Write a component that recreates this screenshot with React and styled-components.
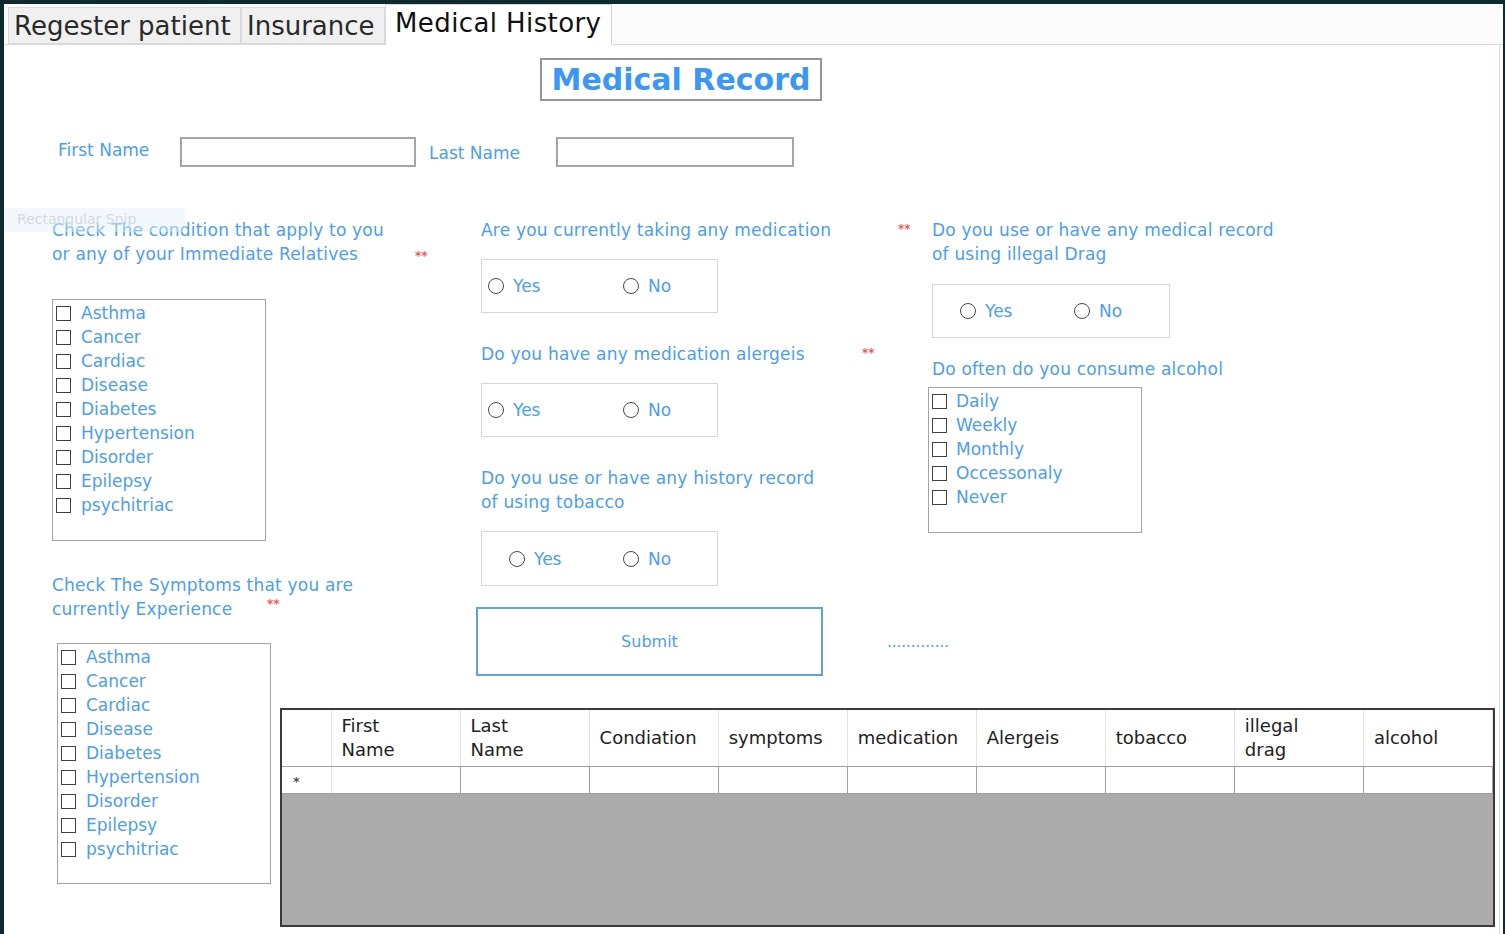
import React from 'react';
import styled, { createGlobalStyle } from 'styled-components';

const BLUE = '#4b9ef0';
const FONT = '"DejaVu Sans", "Liberation Sans", sans-serif';

const GlobalStyle = createGlobalStyle`
  html, body {
    margin: 0;
    padding: 0;
  }
  body {
    background: #0f2a2f;
    font-family: ${FONT};
    overflow: hidden;
  }
  * {
    box-sizing: border-box;
  }
`;

const Window = styled.div`
  margin: 4px 0 0 4px;
  width: 1499px;
  height: 930px;
  background: #fff;
  display: flex;
  flex-direction: column;
`;

const TabStrip = styled.div`
  height: 41px;
  display: flex;
  align-items: flex-end;
  padding-left: 4px;
  border-bottom: 1px solid #d9d9d9;
  background: #fcfcfc;
`;

const Tab = styled.div`
  width: ${p => p.$width}px;
  height: ${p => (p.$active ? 41 : 37)}px;
  margin-bottom: ${p => (p.$active ? -1 : 0)}px;
  padding: ${p => (p.$active ? '0 0 4px 9px' : '0 0 0 5px')};
  display: flex;
  align-items: center;
  font-size: 26px;
  letter-spacing: ${p => (p.$active ? 0.4 : 0)}px;
  color: ${p => (p.$active ? '#111' : '#2a2a2a')};
  background: ${p => (p.$active ? '#fff' : '#f0f0f0')};
  border: 1px solid #d9d9d9;
  border-bottom: ${p => (p.$active ? 'none' : '1px solid #d9d9d9')};
  white-space: nowrap;
  position: relative;
`;

const Panel = styled.div`
  position: relative;
  flex: 1;
  width: 1496px;
  border-right: 1px solid #dedede;
  padding-left: 48px;
  display: flex;
  flex-direction: column;
  align-items: flex-start;
`;

const SnipHint = styled.div`
  position: absolute;
  left: 0;
  top: 163px;
  width: 181px;
  height: 24px;
  padding-left: 13px;
  background: rgba(226, 240, 250, 0.45);
  color: #d3d9de;
  font-size: 14px;
  line-height: 22px;
`;

const TitleBox = styled.div`
  margin: 13px 0 0 488px;
  width: 282px;
  height: 43px;
  border: 2px solid #959595;
  display: flex;
  align-items: center;
  justify-content: center;
  font-size: 30px;
  font-weight: bold;
  color: #3b97f6;
`;

const NameRow = styled.div`
  margin-top: 36px;
  height: 30px;
  display: flex;
  align-items: flex-start;
`;

const FieldLabel = styled.div`
  width: ${p => p.$width}px;
  margin-left: ${p => p.$ml}px;
  margin-top: ${p => p.$mt}px;
  font-size: 17px;
  line-height: 24px;
  color: ${BLUE};
`;

const TextInput = styled.input`
  width: ${p => p.$width}px;
  height: 30px;
  border: 2px solid #a5a5a5;
  background: #fff;
  outline: none;
`;

const MainArea = styled.div`
  margin-top: 51px;
  display: flex;
  align-items: flex-start;
`;

const LeftCol = styled.div`
  width: 228px;
  flex: none;
  display: flex;
  flex-direction: column;
  align-items: flex-start;
`;

const RightArea = styled.div`
  display: flex;
  flex-direction: column;
  align-items: flex-start;
`;

const TopRow = styled.div`
  display: flex;
  align-items: flex-start;
`;

const MiddleCol = styled.div`
  margin-left: 196px;
  width: 452px;
  display: flex;
  flex-direction: column;
  align-items: flex-start;
`;

const SideCol = styled.div`
  display: flex;
  flex-direction: column;
  align-items: flex-start;
`;

const Question = styled.div`
  display: flex;
  align-items: flex-start;
  margin-top: ${p => p.$mt || 0}px;
  margin-left: ${p => p.$ml || 0}px;
`;

const QuestionText = styled.div`
  width: ${p => p.$width}px;
  flex: none;
  font-size: 17px;
  line-height: 24px;
  letter-spacing: 0.2px;
  color: ${BLUE};
  white-space: nowrap;
`;

const Stars = styled.span`
  margin-top: ${p => p.$mt}px;
  font-size: 12px;
  line-height: 10px;
  font-weight: bold;
  color: #f05a5a;
`;

const CheckList = styled.div`
  width: 214px;
  height: ${p => p.$height}px;
  margin-top: ${p => p.$mt}px;
  margin-left: ${p => p.$ml || 0}px;
  border: 1px solid #a4a4a4;
  padding: 1px 0 0 3px;
  display: flex;
  flex-direction: column;
`;

const CheckItem = styled.label`
  height: 24px;
  display: flex;
  align-items: center;
  gap: ${p => p.$gap || 10}px;
  font-size: 17px;
  color: ${BLUE};
`;

const CheckSquare = styled.span`
  width: 15px;
  height: 15px;
  flex: none;
  border: 1.5px solid #3f3f3f;
  background: #fff;
`;

const RadioBox = styled.div`
  width: ${p => p.$width}px;
  height: ${p => p.$height}px;
  margin-top: ${p => p.$mt}px;
  margin-left: ${p => p.$ml}px;
  padding-left: ${p => p.$pad}px;
  border: 1px solid #d6d6d6;
  display: flex;
  align-items: center;
`;

const RadioOption = styled.label`
  width: ${p => p.$width || 'auto'};
  display: flex;
  align-items: center;
  gap: 9px;
  font-size: 17px;
  color: ${BLUE};
`;

const RadioCircle = styled.span`
  width: 16px;
  height: 16px;
  flex: none;
  border-radius: 50%;
  border: 1.5px solid #4a4a4a;
  background: #fff;
`;

const SubmitRow = styled.div`
  margin-top: 21px;
  display: flex;
  align-items: center;
`;

const SubmitButton = styled.button`
  width: 347px;
  height: 69px;
  border: 2px solid #5ea2e4;
  background: #fff;
  color: ${BLUE};
  font-family: ${FONT};
  font-size: 16px;
  cursor: pointer;
`;

const Dots = styled.span`
  margin-left: 64px;
  font-size: 15px;
  color: ${BLUE};
`;

const GridFrame = styled.div`
  margin-top: 32px;
  width: 1215px;
  height: 219px;
  border: 2px solid #3a3a3a;
  background: #ababab;
`;

const DataGrid = styled.table`
  width: 100%;
  border-collapse: collapse;
  table-layout: fixed;
  font-family: ${FONT};
`;

const Col = styled.col`
  width: ${p => p.$width}px;
`;

const HeadCell = styled.th`
  height: 56px;
  padding: 0 0 0 10px;
  text-align: left;
  vertical-align: middle;
  font-weight: normal;
  font-size: 18px;
  line-height: 24px;
  color: #222;
  background: #fff;
  border-right: 1px solid #e4e4e4;
  border-bottom: 1px solid #a0a0a0;
`;

const BodyCell = styled.td`
  height: 27px;
  padding: 0;
  background: #fff;
  border-right: 1px solid #a0a0a0;
  border-bottom: 1px solid #a0a0a0;
`;

const MarkerCell = styled(BodyCell)`
  padding: 4px 0 0 11px;
  font-size: 13px;
  font-weight: bold;
  color: #555;
  border-right-color: #e4e4e4;
`;

const conditions = ['Asthma', 'Cancer', 'Cardiac', 'Disease', 'Diabetes', 'Hypertension', 'Disorder', 'Epilepsy', 'psychitriac'];
const frequencies = ['Daily', 'Weekly', 'Monthly', 'Occessonaly', 'Never'];
const columns = [['First', 'Name'], ['Last', 'Name'], ['Condiation'], ['symptoms'], ['medication'], ['Alergeis'], ['tobacco'], ['illegal', 'drag'], ['alcohol']];

const YesNo = ({ mt, ml, width, pad, yesWidth, height = 54 }) => (
  <RadioBox $mt={mt} $ml={ml} $width={width} $pad={pad} $height={height}>
    <RadioOption $width={`${yesWidth}px`}><RadioCircle />Yes</RadioOption>
    <RadioOption><RadioCircle />No</RadioOption>
  </RadioBox>
);

const Checks = ({ items, gap, ...rest }) => (
  <CheckList {...rest}>
    {items.map(item => (
      <CheckItem key={item} $gap={gap}><CheckSquare />{item}</CheckItem>
    ))}
  </CheckList>
);

export default function App() {
  return (
    <>
      <GlobalStyle />
      <Window>
        <TabStrip>
          <Tab $width={233}>Regester patient</Tab>
          <Tab $width={144}>Insurance</Tab>
          <Tab $width={227} $active>Medical History</Tab>
        </TabStrip>

        <Panel>
          <SnipHint>Rectangular Snip</SnipHint>

          <TitleBox>Medical Record</TitleBox>

          <NameRow>
            <FieldLabel $width={122} $ml={6} $mt={1}>First Name</FieldLabel>
            <TextInput $width={236} />
            <FieldLabel $width={127} $ml={13} $mt={4}>Last Name</FieldLabel>
            <TextInput $width={238} />
          </NameRow>

          <MainArea>
            <LeftCol>
              <Question>
                <QuestionText $width={363}>
                  Check The condition that apply to you<br />or any of your Immediate Relatives
                </QuestionText>
                <Stars $mt={33}>**</Stars>
              </Question>
              <Checks items={conditions} $height={242} $mt={33} />

              <Question $mt={32}>
                <QuestionText $width={215}>
                  Check The Symptoms that you are<br />currently Experience
                </QuestionText>
                <Stars $mt={26}>**</Stars>
              </Question>
              <Checks items={conditions} $height={241} $mt={22} $ml={5} />
            </LeftCol>

            <RightArea>
              <TopRow>
                <MiddleCol>
                  <Question $ml={5}>
                    <QuestionText $width={417}>Are you currently taking any medication</QuestionText>
                    <Stars $mt={6}>**</Stars>
                  </Question>
                  <YesNo mt={17} ml={5} width={237} pad={6} yesWidth={135} />

                  <Question $mt={29} $ml={5}>
                    <QuestionText $width={381}>Do you have any medication alergeis</QuestionText>
                    <Stars $mt={6}>**</Stars>
                  </Question>
                  <YesNo mt={17} ml={5} width={237} pad={6} yesWidth={135} />

                  <Question $mt={29} $ml={5}>
                    <QuestionText $width={400}>
                      Do you use or have any history record<br />of using tobacco
                    </QuestionText>
                  </Question>
                  <YesNo mt={17} ml={5} width={237} pad={27} yesWidth={114} height={55} />

                  <SubmitRow>
                    <SubmitButton>Submit</SubmitButton>
                    <Dots>.............</Dots>
                  </SubmitRow>
                </MiddleCol>

                <SideCol>
                  <Question $ml={4}>
                    <QuestionText $width={400}>
                      Do you use or have any medical record<br />of using illegal Drag
                    </QuestionText>
                  </Question>
                  <YesNo mt={18} ml={4} width={238} pad={27} yesWidth={114} />

                  <Question $mt={19} $ml={4}>
                    <QuestionText $width={400}>Do often do you consume alcohol</QuestionText>
                  </Question>
                  <Checks items={frequencies} gap={9} $height={146} $mt={6} />
                </SideCol>
              </TopRow>

              <GridFrame>
                <DataGrid>
                  <colgroup>
                    <Col $width={49} />
                    {columns.map((c, i) => <Col key={i} $width={129} />)}
                  </colgroup>
                  <thead>
                    <tr>
                      <HeadCell />
                      {columns.map((lines, i) => (
                        <HeadCell key={i}>
                          {lines.map((l, j) => (
                            <React.Fragment key={j}>{j > 0 && <br />}{l}</React.Fragment>
                          ))}
                        </HeadCell>
                      ))}
                    </tr>
                  </thead>
                  <tbody>
                    <tr>
                      <MarkerCell>*</MarkerCell>
                      {columns.map((c, i) => <BodyCell key={i} />)}
                    </tr>
                  </tbody>
                </DataGrid>
              </GridFrame>
            </RightArea>
          </MainArea>
        </Panel>
      </Window>
    </>
  );
}
